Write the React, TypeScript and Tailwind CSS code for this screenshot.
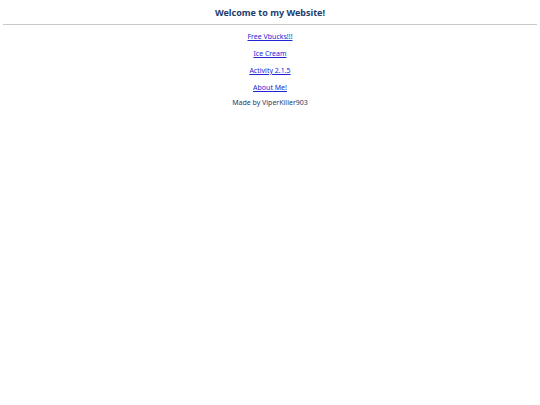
import React from "react";

const links = ["Free Vbucks!!!", "Ice Cream", "Activity 2.1.5", "About Me!"];

const App = () => {
  return (
    <div
      className="min-h-[405px] bg-white px-[3px] text-[#1b3d6e]"
      style={{ fontFamily: '"Comic Sans MS", "Noto Sans", sans-serif' }}
    >
      <h1 className="pt-[6px] text-center text-[9px] font-bold leading-[13px]">
        Welcome to my Website!
      </h1>
      <hr className="mt-[5px] border-t border-[#c8c8c8]" />
      <div className="mt-[7px] flex flex-col items-center gap-[7px] text-[7px] leading-[10px]">
        {links.map((l) => (
          <a key={l} href="#" className="text-[#2323d6] underline">
            {l}
          </a>
        ))}
        <p className="-mt-[2px]">Made by ViperKiller903</p>
      </div>
    </div>
  );
};

export default App;
